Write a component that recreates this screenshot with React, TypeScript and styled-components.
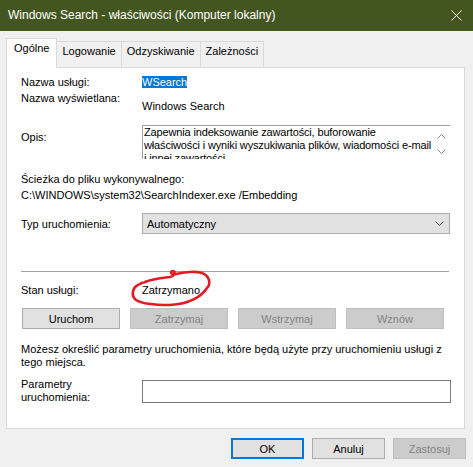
import styled, { createGlobalStyle } from "styled-components";

const GlobalStyle = createGlobalStyle`
  html, body {
    margin: 0;
    padding: 0;
    background: #f0f0f0;
  }
  body {
    font-family: "Liberation Sans", Arial, sans-serif;
    font-size: 11px;
    color: #000;
  }
  * {
    box-sizing: border-box;
  }
`;

const Window = styled.div`
  width: 473px;
  height: 467px;
  background: #f0f0f0;
  display: flex;
  flex-direction: column;
  overflow: hidden;
`;

const TitleBar = styled.div`
  flex: none;
  height: 31px;
  background: #435620;
  color: #fff;
  display: flex;
  align-items: center;
  justify-content: space-between;
  padding: 0 11px 1px 8px;
  font-size: 12px;
`;

const CloseBtn = styled.svg`
  display: block;
`;

const TabStrip = styled.div`
  display: flex;
  align-items: flex-end;
  height: 30px;
  margin: 7px 0 -1px;
  padding-left: 6px;
  position: relative;
  z-index: 1;
`;

const Tab = styled.div<{ $active?: boolean }>`
  height: ${({ $active }) => ($active ? "30px" : "27px")};
  padding: 3px ${({ $active }) => ($active ? "7px" : "5px")} 0;
  line-height: 13px;
  background: ${({ $active }) => ($active ? "#fff" : "#f0f0f0")};
  border: 1px solid #d9d9d9;
  border-bottom: ${({ $active }) => ($active ? "none" : "1px solid #d9d9d9")};
  margin-left: -1px;
  &:first-child {
    margin-left: 0;
  }
`;

const Panel = styled.div`
  flex: none;
  height: 362px;
  margin: 0 8px 0 6px;
  background: #fff;
  border: 1px solid #d9d9d9;
  padding: 7px 14px 0;
  display: flex;
  flex-direction: column;
`;

const Row = styled.div<{ $top: number; $align?: string }>`
  display: grid;
  grid-template-columns: 121px 1fr;
  align-items: ${({ $align }) => $align || "start"};
  margin-top: ${({ $top }) => $top}px;
  line-height: 14px;
`;

const Value = styled.div<{ $pad?: number }>`
  padding-top: ${({ $pad }) => $pad || 0}px;
  position: relative;
`;

const Selected = styled.span`
  background: #0078d7;
  color: #fff;
`;

const Label = styled.div<{ $pad?: number }>`
  padding-top: ${({ $pad }) => $pad || 0}px;
`;

const MultiLabel = styled.div`
  line-height: 13px;
`;

const DescBox = styled.div`
  height: 34px;
  border-top: 1px solid #a0a0a0;
  border-left: 1px solid #a0a0a0;
  display: grid;
  grid-template-columns: 1fr 17px;
  overflow: hidden;
`;

const DescText = styled.div`
  padding-left: 1px;
  line-height: 13px;
  letter-spacing: -0.15px;
  white-space: nowrap;
  overflow: hidden;
`;

const ScrollBar = styled.div`
  display: flex;
  flex-direction: column;
  align-items: center;
  gap: 10px;
  padding-top: 8px;
`;

const PathBlock = styled.div<{ $top: number }>`
  margin-top: ${({ $top }) => $top}px;
  line-height: 16px;
`;

const Combo = styled.div`
  height: 21px;
  background: #e1e1e1;
  border: 1px solid #adadad;
  display: flex;
  align-items: center;
  justify-content: space-between;
  padding: 0 5px 0 4px;
`;

const Separator = styled.div<{ $top: number }>`
  margin-top: ${({ $top }) => $top}px;
  height: 1px;
  background: #a0a0a0;
  margin-right: 1px;
`;

const ButtonRow = styled.div<{ $top: number }>`
  display: flex;
  gap: 10px;
  margin-top: ${({ $top }) => $top}px;
  padding-left: 1px;
`;

const Button = styled.button<{ $width: number; $default?: boolean }>`
  width: ${({ $width }) => $width}px;
  height: 21px;
  padding: 0;
  font: inherit;
  color: #000;
  background: #e1e1e1;
  border: ${({ $default }) => ($default ? "2px solid #0078d7" : "1px solid #adadad")};
  &:disabled {
    background: #cccccc;
    border-color: #bfbfbf;
    color: #838383;
  }
`;

const Hint = styled.p<{ $top: number }>`
  margin: ${({ $top }) => $top}px 0 0;
  line-height: 13px;
`;

const TextInput = styled.input`
  width: 309px;
  height: 23px;
  border: 1px solid #7a7a7a;
  background: #fff;
  font: inherit;
  padding: 0 3px;
  outline: none;
`;

const Footer = styled.div`
  display: flex;
  justify-content: flex-end;
  gap: 8px;
  margin-top: 9px;
  padding-right: 7px;
`;

const Scribble = styled.svg`
  position: absolute;
  left: -14px;
  top: -17px;
  pointer-events: none;
`;

const Chevron = ({ up, color }: { up?: boolean; color: string }) => (
  <svg width="9" height="5" viewBox="0 0 9 5">
    <polyline
      points={up ? "0.5,4.5 4.5,0.5 8.5,4.5" : "0.5,0.5 4.5,4.5 8.5,0.5"}
      fill="none"
      stroke={color}
      strokeWidth="1"
    />
  </svg>
);

export default function App() {
  return (
    <>
      <GlobalStyle />
      <Window>
        <TitleBar>
          <span>Windows Search - właściwości (Komputer lokalny)</span>
          <CloseBtn width="11" height="11" viewBox="0 0 11 11">
            <path d="M0.5 0.5 L10.5 10.5 M10.5 0.5 L0.5 10.5" stroke="#fff" strokeWidth="1" />
          </CloseBtn>
        </TitleBar>

        <TabStrip>
          <Tab $active>Ogólne</Tab>
          <Tab>Logowanie</Tab>
          <Tab>Odzyskiwanie</Tab>
          <Tab>Zależności</Tab>
        </TabStrip>

        <Panel>
          <Row $top={0}>
            <Label>Nazwa usługi:</Label>
            <Value>
              <Selected>WSearch</Selected>
            </Value>
          </Row>

          <Row $top={2}>
            <Label>Nazwa wyświetlana:</Label>
            <Value $pad={8}>Windows Search</Value>
          </Row>

          <Row $top={12}>
            <Label $pad={5}>Opis:</Label>
            <DescBox>
              <DescText>
                Zapewnia indeksowanie zawartości, buforowanie
                <br />
                właściwości i wyniki wyszukiwania plików, wiadomości e-mail
                <br />
                i innej zawartości.
              </DescText>
              <ScrollBar>
                <Chevron up color="#8c8c8c" />
                <Chevron color="#8c8c8c" />
              </ScrollBar>
            </DescBox>
          </Row>

          <PathBlock $top={12}>
            <div>Ścieżka do pliku wykonywalnego:</div>
            <div>C:\WINDOWS\system32\SearchIndexer.exe /Embedding</div>
          </PathBlock>

          <Row $top={10} $align="center">
            <Label>Typ uruchomienia:</Label>
            <Combo>
              <span>Automatyczny</span>
              <Chevron color="#505050" />
            </Combo>
          </Row>

          <Separator $top={37} />

          <Row $top={11}>
            <Label>Stan usługi:</Label>
            <Value>
              Zatrzymano
              <Scribble width="86" height="42" viewBox="0 0 86 42">
                <path
                  d="M17 16 C24 13, 34 12, 42 11 C47 10, 48 5, 45 5 C42 5, 42 9, 48 8 C56 6, 68 5, 74 7 C82 10, 83 18, 79 22 C74 30, 62 38, 42 39 C28 39, 14 38, 8 34 C3 30, 4 22, 10 19 C13 17, 15 16, 18 16"
                  fill="none"
                  stroke="#e31b23"
                  strokeWidth="2.6"
                  strokeLinecap="round"
                  strokeLinejoin="round"
                />
              </Scribble>
            </Value>
          </Row>

          <ButtonRow $top={11}>
            <Button $width={98}>Uruchom</Button>
            <Button $width={98} disabled>
              Zatrzymaj
            </Button>
            <Button $width={98} disabled>
              Wstrzymaj
            </Button>
            <Button $width={98} disabled>
              Wznów
            </Button>
          </ButtonRow>

          <Hint $top={14}>
            Możesz określić parametry uruchomienia, które będą użyte przy uruchomieniu usługi z
            tego miejsca.
          </Hint>

          <Row $top={9} $align="center">
            <MultiLabel>
              Parametry
              <br />
              uruchomienia:
            </MultiLabel>
            <TextInput />
          </Row>
        </Panel>

        <Footer>
          <Button $width={73} $default>
            OK
          </Button>
          <Button $width={73}>Anuluj</Button>
          <Button $width={73} disabled>
            Zastosuj
          </Button>
        </Footer>
      </Window>
    </>
  );
}
